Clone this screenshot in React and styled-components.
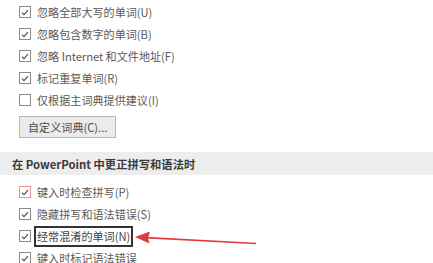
import styled, { createGlobalStyle } from "styled-components";

const Global = createGlobalStyle`
  html, body { margin: 0; padding: 0; background: #fff; }
  body { font-family: "Noto Sans CJK SC", "Noto Sans", sans-serif; }
`;

const Page = styled.div`
  position: relative;
  width: 433px;
  height: 263px;
  overflow: hidden;
  background: #fff;
`;

const List = styled.div`
  display: flex;
  flex-direction: column;
  padding: ${({ $top }) => $top}px 0 0 19px;
`;

const Row = styled.label`
  display: flex;
  align-items: center;
  height: 22px;
  gap: 6px;
  font-size: 11.1px;
  color: #5a5a5a;
  white-space: nowrap;
`;

const Box = styled.span`
  box-sizing: border-box;
  width: 12px;
  height: 12px;
  border: 1px solid ${({ $red }) => ($red ? "#e79090" : "#8c8c8c")};
  background: #fff;
  display: flex;
  align-items: center;
  justify-content: center;
  flex-shrink: 0;
`;

const Label = styled.span`
  outline: ${({ $marked }) => ($marked ? "2px solid #333" : "none")};
  outline-offset: 1px;
  color: ${({ $marked }) => ($marked ? "#444" : "#5a5a5a")};
  line-height: 15px;
`;

const Button = styled.button`
  margin: 5px 0 0 19px;
  height: 22px;
  padding: 0 8px;
  font-family: inherit;
  font-size: 11.1px;
  color: #4a4a4a;
  background: #ebebeb;
  border: 1px solid #b8b8b8;
  align-self: flex-start;
`;

const Section = styled.div`
  margin-top: 14px;
  height: 23px;
  background: #ededed;
  display: flex;
  align-items: center;
  padding-left: 12px;
  font-size: 11.3px;
  font-weight: 700;
  color: #3a3a3a;
`;

const Arrow = styled.svg`
  position: absolute;
  left: 0;
  top: 0;
  pointer-events: none;
`;

const Check = ({ red }) => (
  <Box $red={red}>
    <svg width="8" height="7" viewBox="0 0 8 7">
      <path d="M1 3.6 L3 5.6 L7 1.2" fill="none" stroke="#4a4a4a" strokeWidth="1.1" />
    </svg>
  </Box>
);

const Item = ({ checked = true, red, marked, children }) => (
  <Row>
    {checked ? <Check red={red} /> : <Box />}
    <Label $marked={marked}>{children}</Label>
  </Row>
);

export default function App() {
  return (
    <Page>
      <Global />
      <List $top={1}>
        <Item>忽略全部大写的单词(U)</Item>
        <Item>忽略包含数字的单词(B)</Item>
        <Item>忽略 Internet 和文件地址(F)</Item>
        <Item>标记重复单词(R)</Item>
        <Item checked={false}>仅根据主词典提供建议(I)</Item>
      </List>
      <Button>自定义词典(C)...</Button>
      <Section>在 PowerPoint 中更正拼写和语法时</Section>
      <List $top={6}>
        <Item red>键入时检查拼写(P)</Item>
        <Item>隐藏拼写和语法错误(S)</Item>
        <Item marked>经常混淆的单词(N)</Item>
        <Item>键入时标记语法错误</Item>
      </List>
      <Arrow width="433" height="263" viewBox="0 0 433 263">
        <line x1="146" y1="237.6" x2="256" y2="243.5" stroke="#e03a3a" strokeWidth="1.6" />
        <path d="M135 237 L150 231.5 L148 238 L149.5 243.5 Z" fill="#e03a3a" />
      </Arrow>
    </Page>
  );
}
